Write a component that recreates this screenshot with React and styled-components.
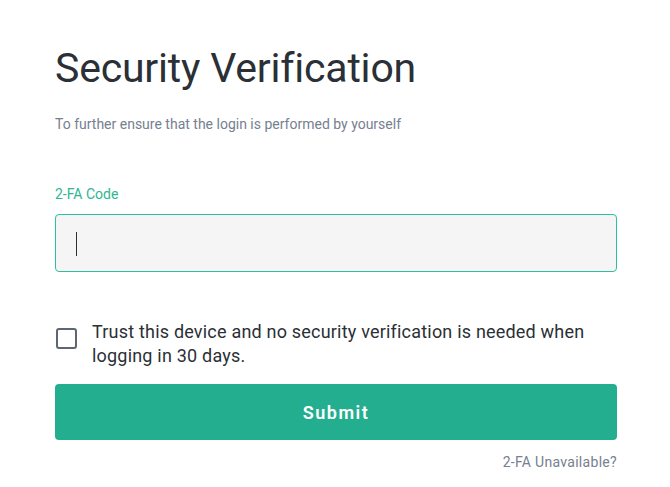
import React, { useState } from "react";
import styled, { createGlobalStyle } from "styled-components";

const GlobalStyle = createGlobalStyle`
	html, body {
		margin: 0;
		padding: 0;
		background: #ffffff;
	}
	body {
		font-family: Roboto, "Noto Sans", "Liberation Sans", sans-serif;
	}
`;

const App = () => {
	const [code, setCode] = useState("");
	const [trust, setTrust] = useState(false);

	return (
		<>
			<GlobalStyle />
			<Wrapper>
				<Title>Security Verification</Title>
				<SubTitle>To further ensure that the login is performed by yourself</SubTitle>
				<Label htmlFor='code'>2-FA Code</Label>
				<InputBox>
					<Caret />
					<CodeInput id='code' value={code} onChange={(e) => setCode(e.target.value)} />
				</InputBox>
				<TrustRow onClick={() => setTrust(!trust)}>
					<CheckBox checked={trust} />
					<TrustText>
						Trust this device and no security verification is needed when logging in 30 days.
					</TrustText>
				</TrustRow>
				<SubmitButton>Submit</SubmitButton>
				<Unavailable>2-FA Unavailable?</Unavailable>
			</Wrapper>
		</>
	);
};

export default App;

const Wrapper = styled.div`
	width: 562px;
	padding: 40px 0 0 55px;
	display: flex;
	flex-direction: column;
`;

const Title = styled.h1`
	margin: 0;
	font-size: 41px;
	font-weight: 400;
	line-height: 56px;
	color: #2b2f36;
	letter-spacing: -0.2px;
`;

const SubTitle = styled.div`
	margin-top: 19px;
	font-size: 14px;
	line-height: 18px;
	color: #76808f;
`;

const Label = styled.label`
	margin-top: 52px;
	font-size: 14px;
	line-height: 18px;
	color: #2fb594;
`;

const InputBox = styled.div`
	position: relative;
	margin-top: 11px;
	height: 56px;
	border: 1px solid #2fbf9c;
	border-radius: 4px;
	background: #f5f5f5;
	display: flex;
	align-items: center;
	padding: 0 20px;
`;

const Caret = styled.span`
	position: absolute;
	left: 20px;
	top: 17px;
	width: 1px;
	height: 24px;
	background: #2b2f36;
`;

const CodeInput = styled.input`
	flex: 1;
	border: none;
	outline: none;
	background: transparent;
	font-size: 16px;
	color: #2b2f36;
	caret-color: transparent;
`;

const TrustRow = styled.div`
	margin-top: 48px;
	display: flex;
	align-items: flex-start;
	gap: 15px;
	cursor: pointer;
`;

const CheckBox = styled.span`
	flex: none;
	margin-top: 8px;
	margin-left: 1px;
	width: 17px;
	height: 17px;
	border: 2px solid #5e6673;
	border-radius: 3px;
	background: ${(props) => (props.checked ? "#2fb594" : "transparent")};
`;

const TrustText = styled.div`
	font-size: 18px;
	line-height: 24px;
	letter-spacing: 0.2px;
	color: #2b2f36;
`;

const SubmitButton = styled.button`
	margin-top: 16px;
	height: 56px;
	border: none;
	border-radius: 4px;
	background: #23af8f;
	color: #ffffff;
	font-family: inherit;
	font-size: 18px;
	font-weight: 600;
	letter-spacing: 1.5px;
	cursor: pointer;
`;

const Unavailable = styled.div`
	margin-top: 13px;
	align-self: flex-end;
	font-size: 14px;
	line-height: 18px;
	letter-spacing: 0.3px;
	color: #76808f;
`;
